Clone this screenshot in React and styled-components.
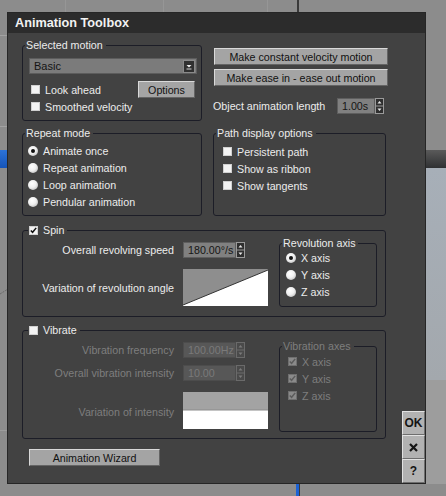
import React from 'react'
import styled, { createGlobalStyle } from 'styled-components'

const GlobalStyle = createGlobalStyle`
  html, body {
    margin: 0;
    padding: 0;
    background: #8c8c8c;
  }
  body {
    font-family: "Liberation Sans", Arial, sans-serif;
    font-size: 10.7px;
    overflow: hidden;
  }
`

const Screen = styled.div`
  position: relative;
  width: 446px;
  height: 496px;
  overflow: hidden;
  background: #8c8c8c;
`

const Viewport = styled.svg`
  position: absolute;
  left: 0;
  top: 0;
  display: block;
`

const Dialog = styled.div`
  position: absolute;
  left: 8px;
  top: 13px;
  width: 417px;
  height: 470px;
  background: #424242;
  box-shadow: 0 0 0 1px #262626;
  display: flex;
  flex-direction: column;
  color: #ececec;
`

const TitleBar = styled.div`
  height: 20px;
  flex: none;
  background: #2c2c2c;
  padding-left: 7px;
  font-weight: bold;
  font-size: 12.7px;
  line-height: 21px;
  color: #f2f2f2;
`

const Body = styled.div`
  flex: 1;
  display: flex;
  min-height: 0;
`

const Main = styled.div`
  width: 364px;
  padding: 6px 0 0 14px;
  display: flex;
  flex-direction: column;
`

const TopGrid = styled.div`
  display: grid;
  grid-template-columns: 180px 173px;
  column-gap: 11px;
  row-gap: 6px;
`

const Group = styled.fieldset`
  margin: ${p => p.$m || '0'};
  padding: 0;
  box-sizing: border-box;
  height: ${p => p.$h}px;
  width: ${p => (p.$w ? `${p.$w}px` : 'auto')};
  flex: none;
  min-width: 0;
  border: 1px solid #1c1d27;
  border-radius: 3px;
`

const Legend = styled.legend`
  margin-left: ${p => (p.$check ? 5 : 2)}px;
  padding: 0 3px 0 1px;
  height: 12px;
  line-height: 12px;
  display: flex;
  align-items: center;
  gap: 5px;
  color: ${p => (p.$dim ? '#7e7e7e' : '#ececec')};
`

const GroupInner = styled.div`
  padding: ${p => p.$pad};
  display: flex;
  flex-direction: column;
`

const OptRow = styled.div`
  height: 17px;
  display: flex;
  align-items: center;
  gap: 5px;
  padding-left: ${p => p.$indent || 0}px;
  color: ${p => (p.$dim ? '#7e7e7e' : '#ececec')};
  white-space: nowrap;
`

const Select = styled.div`
  height: 16px;
  box-sizing: border-box;
  background: #7b7b7b;
  border: 1px solid #5c5c5c;
  display: flex;
  align-items: center;
  justify-content: space-between;
  padding: 0 1px 0 4px;
  color: #141414;
  font-size: 11px;
`

const Button = styled.div`
  width: ${p => p.$w}px;
  height: 17px;
  box-sizing: border-box;
  background: #a4a4a4;
  border-top: 1px solid #d9d9d9;
  border-left: 1px solid #d9d9d9;
  border-right: 1px solid #646464;
  border-bottom: 1px solid #646464;
  color: #111;
  display: flex;
  align-items: center;
  justify-content: center;
  margin: ${p => p.$m || '0'};
  white-space: nowrap;
  flex: none;
`

const RightCol = styled.div`
  display: flex;
  flex-direction: column;
  padding-top: 9px;
  gap: 4px;
`

const LengthRow = styled.div`
  margin-top: 8px;
  height: 16px;
  display: flex;
  align-items: center;
  padding-right: 2px;
  white-space: nowrap;
`

const SpinField = styled.div`
  display: flex;
  align-items: stretch;
  height: 16px;
  margin-left: ${p => (p.$auto ? 'auto' : '0')};
`

const ValueBox = styled.div`
  width: ${p => p.$w}px;
  box-sizing: border-box;
  background: ${p => (p.$dim ? '#575757' : '#808080')};
  border: 1px solid ${p => (p.$dim ? '#4c4c4c' : '#5e5e5e')};
  color: ${p => (p.$dim ? '#7a7a7a' : '#151515')};
  display: flex;
  align-items: center;
  padding-left: ${p => p.$pl || 3}px;
  white-space: nowrap;
  overflow: hidden;
`

const CheckBox = styled.span`
  width: 9px;
  height: 9px;
  box-sizing: border-box;
  flex: none;
  background: ${p => (p.$dim ? '#8a8a8a' : '#f3f3f3')};
  border: 1px solid ${p => (p.$dim ? '#6f6f6f' : '#d0d0d0')};
  display: inline-flex;
  align-items: center;
  justify-content: center;
`

const RadioDot = styled.span`
  width: 10px;
  height: 10px;
  flex: none;
  border-radius: 50%;
  background: radial-gradient(circle at 40% 35%, #ffffff 0%, #f0f0f0 45%, #a8a8a8 100%);
  display: inline-flex;
  align-items: center;
  justify-content: center;
  &::after {
    content: '';
    width: 4px;
    height: 4px;
    border-radius: 50%;
    background: ${p => (p.$on ? '#111' : 'transparent')};
  }
`

const GroupStack = styled.div`
  margin-top: ${p => p.$mt}px;
`

const SettingsRow = styled.div`
  display: flex;
  align-items: flex-start;
`

const SettingsGrid = styled.div`
  display: grid;
  grid-template-columns: 151px 85px;
  grid-template-rows: ${p => p.$rows};
  column-gap: 9px;
  row-gap: ${p => p.$gap}px;
  padding-top: 6px;
  margin-right: 11px;
`

const FieldLabel = styled.div`
  align-self: center;
  text-align: right;
  white-space: nowrap;
  margin-top: ${p => p.$mt || 0}px;
  color: ${p => (p.$dim ? '#7e7e7e' : '#ececec')};
`

const Curve = styled.svg`
  display: block;
  margin-top: ${p => p.$mt || 0}px;
`

const SideCol = styled.div`
  margin-left: auto;
  align-self: flex-end;
  width: 23px;
  display: flex;
  flex-direction: column;
`

const SideButton = styled.div`
  height: 24px;
  box-sizing: border-box;
  background: #b2b2b2;
  border-top: 1px solid #e2e2e2;
  border-left: 1px solid #e2e2e2;
  border-bottom: 1px solid #6e6e6e;
  border-right: 1px solid #6e6e6e;
  color: #151515;
  font-weight: bold;
  font-size: 12px;
  display: flex;
  align-items: center;
  justify-content: center;
`

const Check = ({ on, dim }) => (
  <CheckBox $dim={dim}>
    {on && (
      <svg width="7" height="7" viewBox="0 0 7 7">
        <path d="M0.8 3.4 L2.6 5.3 L6.2 0.9" fill="none" stroke={dim ? '#5c5c5c' : '#111'} strokeWidth="1.5" />
      </svg>
    )}
  </CheckBox>
)

const Spinner = ({ dim }) => (
  <svg width="9" height="16" viewBox="0 0 9 16" style={{ display: 'block' }}>
    <rect x="0.5" y="0.5" width="8" height="15" fill={dim ? '#4a4a4a' : '#2e2e2e'} stroke={dim ? '#6a6a6a' : '#9a9a9a'} />
    <line x1="0" y1="8" x2="9" y2="8" stroke={dim ? '#6a6a6a' : '#9a9a9a'} />
    <path d="M2.5 5.5 L4.5 3 L6.5 5.5 Z" fill={dim ? '#7a7a7a' : '#e8e8e8'} />
    <path d="M2.5 10.5 L4.5 13 L6.5 10.5 Z" fill={dim ? '#7a7a7a' : '#e8e8e8'} />
  </svg>
)

const DropArrow = () => (
  <svg width="12" height="13" viewBox="0 0 12 13" style={{ display: 'block' }}>
    <rect x="0.5" y="0.5" width="11" height="12" fill="#303030" stroke="#8a8a8a" />
    <path d="M3.5 5 L6 7.5 L8.5 5 Z" fill="#eeeeee" />
    <line x1="3.5" y1="9" x2="8.5" y2="9" stroke="#cfcfcf" />
  </svg>
)

const Backdrop = () => (
  <Viewport width="446" height="496" viewBox="0 0 446 496">
    <defs>
      <linearGradient id="band" x1="0" y1="0" x2="0" y2="1">
        <stop offset="0" stopColor="#5a5a5a" />
        <stop offset="1" stopColor="#2f3032" />
      </linearGradient>
      <linearGradient id="sky" x1="0" y1="0" x2="0" y2="1">
        <stop offset="0" stopColor="#a7afb8" />
        <stop offset="1" stopColor="#a3a8ad" />
      </linearGradient>
      <linearGradient id="blue" x1="0" y1="0" x2="0" y2="1">
        <stop offset="0" stopColor="#2c73d8" />
        <stop offset="1" stopColor="#1554b8" />
      </linearGradient>
    </defs>
    <rect width="446" height="496" fill="#8c8c8c" />
    <rect x="65" y="0" width="1" height="13" fill="#969696" />
    <rect x="163" y="0" width="1" height="13" fill="#969696" />
    <rect x="267" y="0" width="1" height="13" fill="#969696" />
    <rect x="297" y="0" width="2" height="13" fill="#3a3a3a" />
    <rect x="0" y="35" width="8" height="1" fill="#a2a2a2" />
    <rect x="0" y="126" width="8" height="1" fill="#a2a2a2" />
    <rect x="0" y="150" width="8" height="18" fill="url(#blue)" />
    <line x1="0" y1="294" x2="8" y2="289" stroke="#6a6a6a" strokeDasharray="2 1" />
    <rect x="0" y="430" width="8" height="1" fill="#9c9c9c" />
    <rect x="425" y="150" width="21" height="18" fill="url(#band)" />
    <rect x="425" y="168" width="21" height="212" fill="url(#sky)" />
    <rect x="425" y="380" width="21" height="104" fill="#9d9d9d" />
    <rect x="296" y="483" width="3" height="13" fill="#1c62d4" />
    <rect x="299" y="483" width="1" height="13" fill="#3a3a3a" />
  </Viewport>
)

export default function App() {
  return (
    <Screen>
      <GlobalStyle />
      <Backdrop />
      <Dialog>
        <TitleBar>Animation Toolbox</TitleBar>
        <Body>
          <Main>
            <TopGrid>
              <Group $h={82}>
                <Legend>Selected motion</Legend>
                <GroupInner $pad="7px 4px 0 6px">
                  <Select>
                    <span>Basic</span>
                    <DropArrow />
                  </Select>
                  <OptRow $indent={2} style={{ marginTop: 7 }}>
                    <Check />
                    <span>Look ahead</span>
                    <Button $w={57} $m="0 2px 0 auto">Options</Button>
                  </OptRow>
                  <OptRow $indent={2}>
                    <Check />
                    <span>Smoothed velocity</span>
                  </OptRow>
                </GroupInner>
              </Group>

              <RightCol>
                <Button $w={174} $m="0 0 0 1px">Make constant velocity motion</Button>
                <Button $w={174} $m="0 0 0 1px">Make ease in - ease out motion</Button>
                <LengthRow>
                  <span>Object animation length</span>
                  <SpinField $auto>
                    <ValueBox $w={38} $pl={4}>1.00s</ValueBox>
                    <Spinner />
                  </SpinField>
                </LengthRow>
              </RightCol>

              <Group $h={89}>
                <Legend>Repeat mode</Legend>
                <GroupInner $pad="3px 4px 0 5px">
                  <OptRow><RadioDot $on /><span>Animate once</span></OptRow>
                  <OptRow><RadioDot /><span>Repeat animation</span></OptRow>
                  <OptRow><RadioDot /><span>Loop animation</span></OptRow>
                  <OptRow><RadioDot /><span>Pendular animation</span></OptRow>
                </GroupInner>
              </Group>

              <Group $h={89}>
                <Legend>Path display options</Legend>
                <GroupInner $pad="4px 4px 0 9px">
                  <OptRow><Check /><span>Persistent path</span></OptRow>
                  <OptRow><Check /><span>Show as ribbon</span></OptRow>
                  <OptRow><Check /><span>Show tangents</span></OptRow>
                </GroupInner>
              </Group>
            </TopGrid>

            <GroupStack $mt={8}>
              <Group $h={93}>
                <Legend $check><Check on /><span>Spin</span></Legend>
                <SettingsRow>
                  <SettingsGrid $rows="16px 37px" $gap={11}>
                    <FieldLabel>Overall revolving speed</FieldLabel>
                    <SpinField>
                      <ValueBox $w={53} $pl={4}>180.00°/s</ValueBox>
                      <Spinner />
                    </SpinField>
                    <FieldLabel>Variation of revolution angle</FieldLabel>
                    <Curve width="85" height="37" viewBox="0 0 85 37">
                      <rect width="85" height="37" fill="#8e8e8e" />
                      <path d="M0 36 L85 1 L85 37 L0 37 Z" fill="#ffffff" />
                      <line x1="0" y1="36" x2="85" y2="1" stroke="#333" strokeWidth="1" />
                    </Curve>
                  </SettingsGrid>
                  <Group $w={98} $h={70} $m="1px 0 0 0">
                    <Legend>Revolution axis</Legend>
                    <GroupInner $pad="0 2px 0 6px">
                      <OptRow><RadioDot $on /><span>X axis</span></OptRow>
                      <OptRow><RadioDot /><span>Y axis</span></OptRow>
                      <OptRow><RadioDot /><span>Z axis</span></OptRow>
                    </GroupInner>
                  </Group>
                </SettingsRow>
              </Group>
            </GroupStack>

            <GroupStack $mt={7}>
              <Group $h={115}>
                <Legend $check><Check /><span>Vibrate</span></Legend>
                <SettingsRow>
                  <SettingsGrid $rows="16px 16px 41px" $gap={7}>
                    <FieldLabel $dim>Vibration frequency</FieldLabel>
                    <SpinField>
                      <ValueBox $w={53} $pl={4} $dim>100.00Hz</ValueBox>
                      <Spinner dim />
                    </SpinField>
                    <FieldLabel $dim>Overall vibration intensity</FieldLabel>
                    <SpinField>
                      <ValueBox $w={53} $pl={4} $dim>10.00</ValueBox>
                      <Spinner dim />
                    </SpinField>
                    <FieldLabel $dim $mt={6}>Variation of intensity</FieldLabel>
                    <Curve width="85" height="37" viewBox="0 0 85 37" $mt={4}>
                      <rect width="85" height="18" fill="#a3a3a3" />
                      <rect y="18" width="85" height="19" fill="#ffffff" />
                      <line x1="0" y1="18" x2="85" y2="18" stroke="#8a8a8a" />
                    </Curve>
                  </SettingsGrid>
                  <Group $w={98} $h={92} $m="4px 0 0 0">
                    <Legend $dim>Vibration axes</Legend>
                    <GroupInner $pad="1px 2px 0 8px">
                      <OptRow $dim><Check on dim /><span>X axis</span></OptRow>
                      <OptRow $dim><Check on dim /><span>Y axis</span></OptRow>
                      <OptRow $dim><Check on dim /><span>Z axis</span></OptRow>
                    </GroupInner>
                  </Group>
                </SettingsRow>
              </Group>
            </GroupStack>

            <Button $w={131} $m="10px 0 0 7px">Animation Wizard</Button>
          </Main>

          <SideCol>
            <SideButton>OK</SideButton>
            <SideButton>
              <svg width="9" height="9" viewBox="0 0 9 9">
                <path d="M1 1 L8 8 M8 1 L1 8" stroke="#151515" strokeWidth="2.2" />
              </svg>
            </SideButton>
            <SideButton>?</SideButton>
          </SideCol>
        </Body>
      </Dialog>
    </Screen>
  )
}
